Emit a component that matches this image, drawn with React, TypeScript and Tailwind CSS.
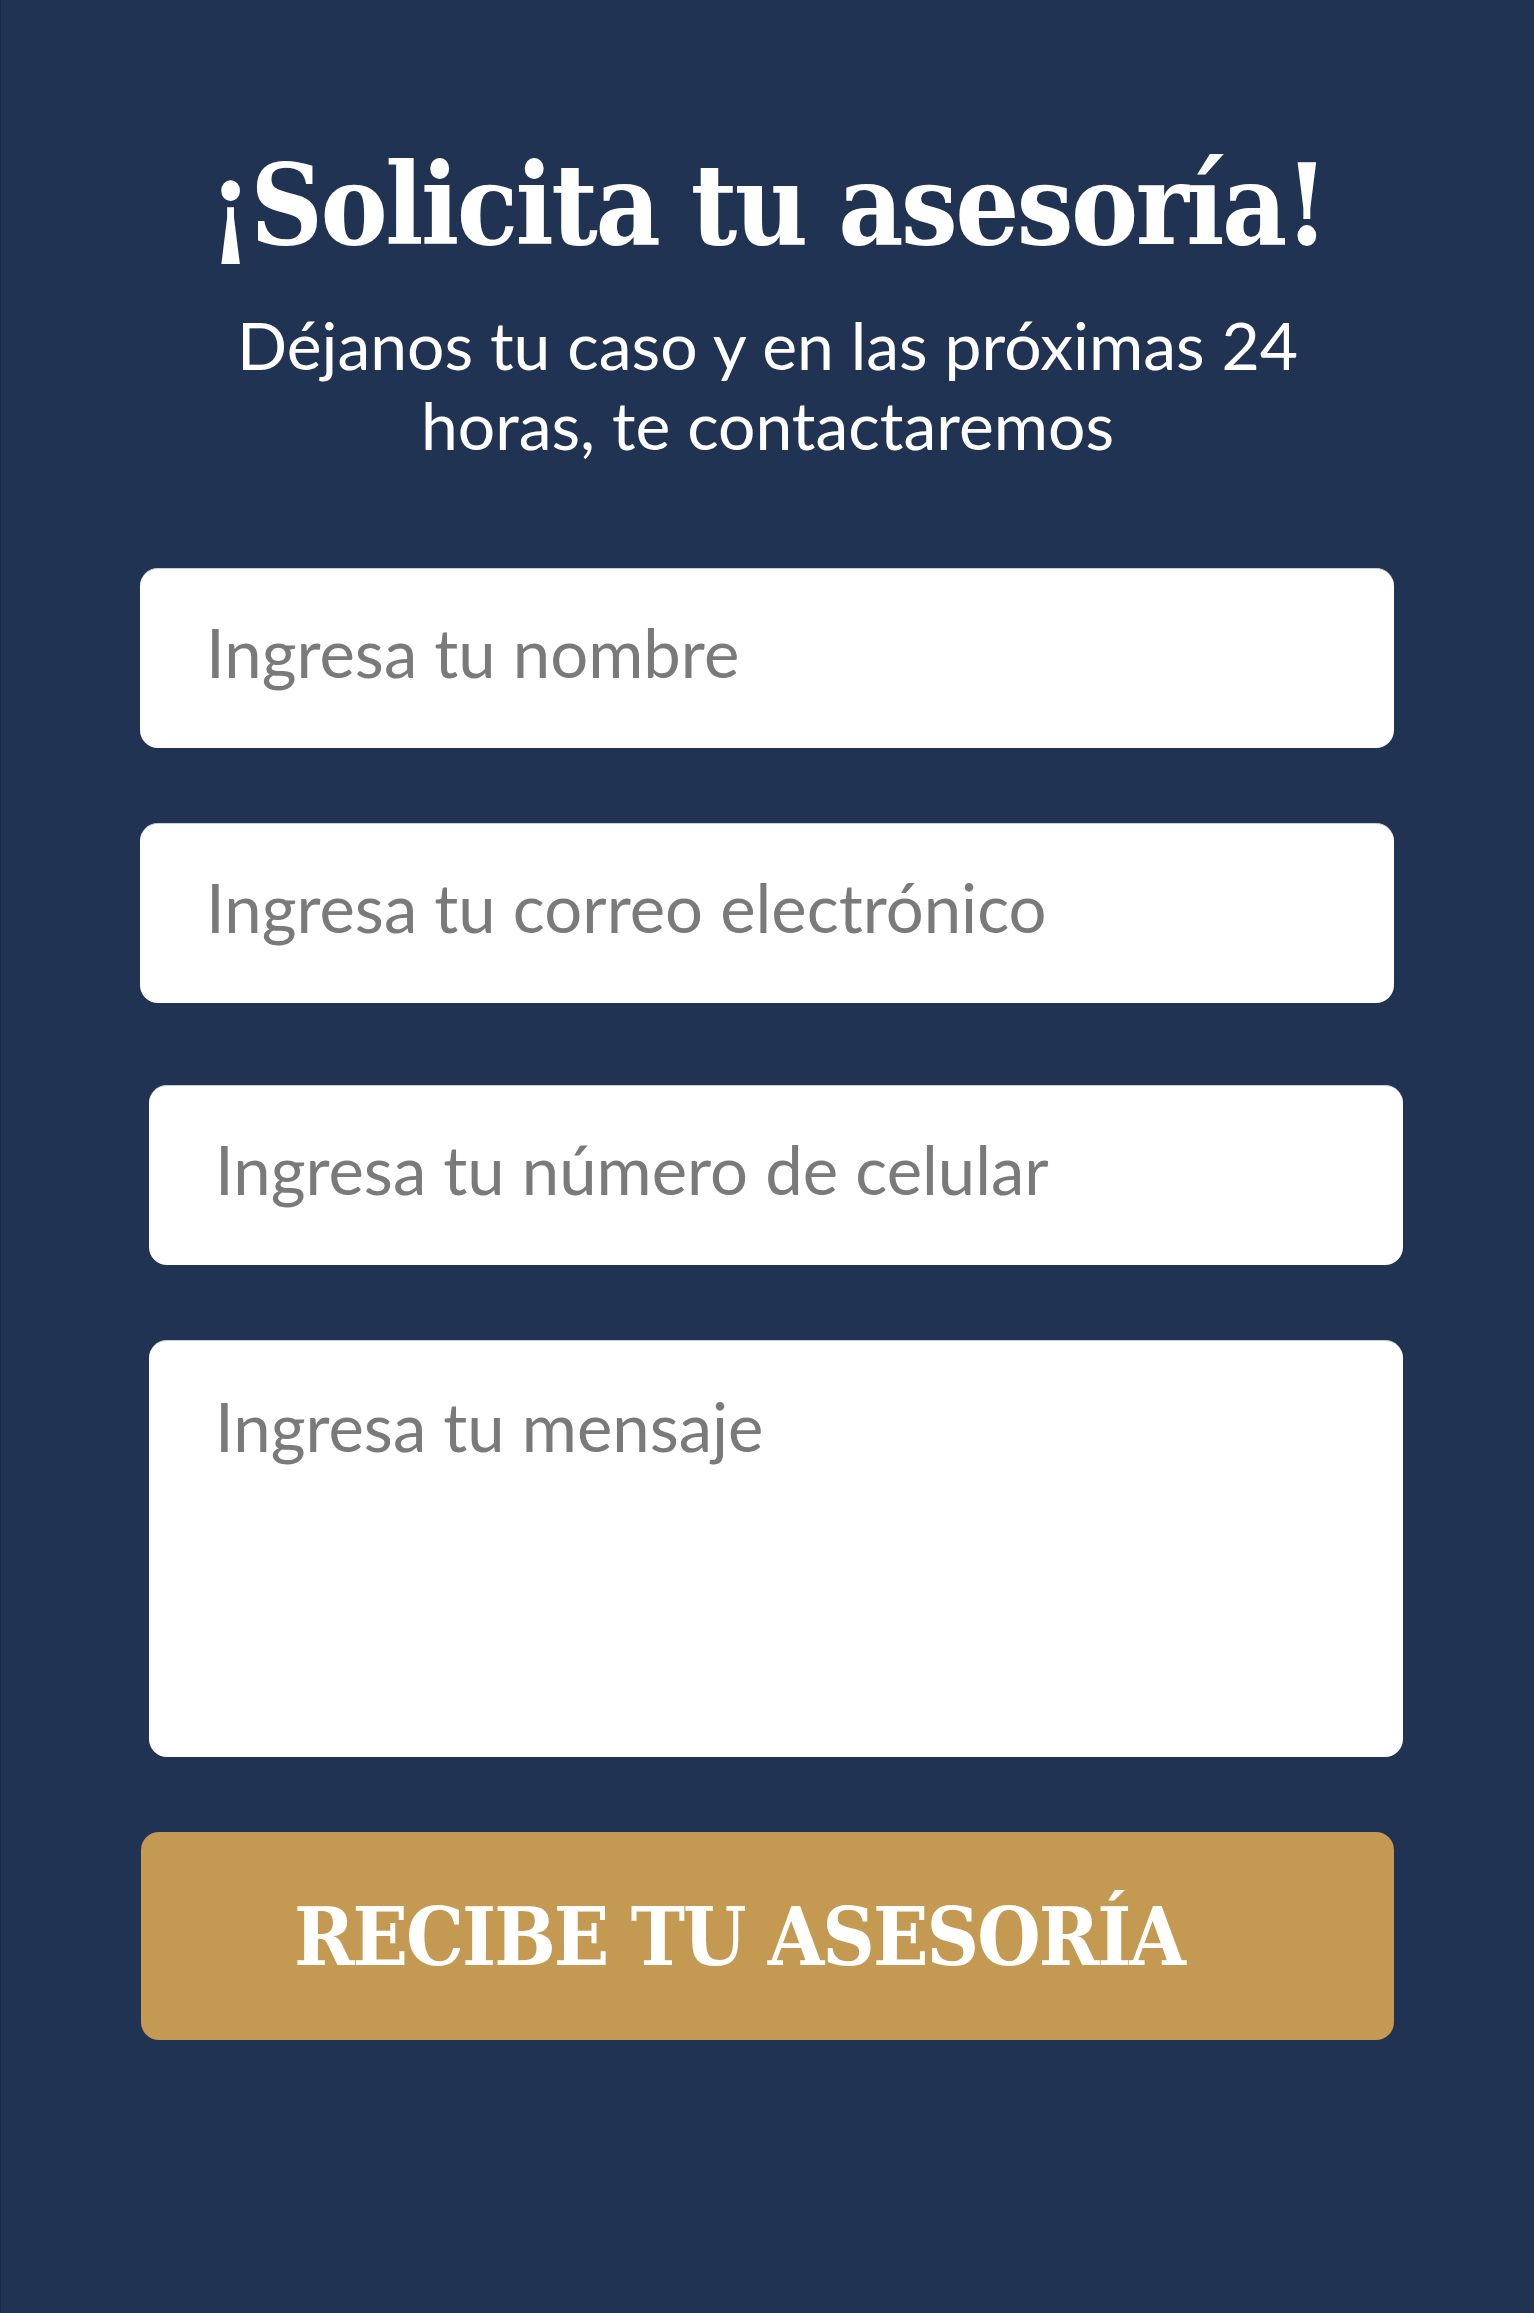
import React from 'react';

const fieldClass =
  "block w-[1254px] h-[180px] rounded-[18px] bg-white border-t border-[#c9ced8] px-[66px] pb-[14px] text-[67px] text-[#333] placeholder:text-[#7a7a7a] font-['Lato',sans-serif] outline-none";

export default function App() {
  return (
    <div className="min-h-screen w-full bg-[#213352] border-l border-[#1a2845] flex flex-col items-center pt-[149px] pb-[274px]">
      <h1 className="font-['DejaVu_Serif',serif] font-bold font-stretch-condensed text-white text-[112px] leading-none tracking-[-2.5px]">
        ¡Solicita tu asesoría!
      </h1>
      <p className="mt-[44px] w-[1100px] text-center font-['Lato',sans-serif] text-white text-[66px] leading-[80px]">
        Déjanos tu caso y en las próximas 24 horas, te contactaremos
      </p>

      <form className="mt-[103px] self-start ml-[139px] w-[1263px] flex flex-col">
        <input type="text" placeholder="Ingresa tu nombre" className={fieldClass} />
        <input type="email" placeholder="Ingresa tu correo electrónico" className={`${fieldClass} mt-[75px]`} />
        <input type="tel" placeholder="Ingresa tu número de celular" className={`${fieldClass} mt-[82px] self-end`} />
        <textarea
          placeholder="Ingresa tu mensaje"
          className="block self-end mt-[75px] w-[1254px] h-[417px] resize-none rounded-[18px] bg-white border-t border-[#c9ced8] px-[66px] pt-[40px] text-[67px] leading-[90px] text-[#333] placeholder:text-[#7a7a7a] font-['Lato',sans-serif] outline-none"
        />
        <button
          type="submit"
          className="mt-[75px] ml-px w-[1253px] h-[208px] rounded-[18px] bg-[#c49a53] flex items-center justify-start pl-[153px] text-white font-['DejaVu_Serif',serif] font-bold font-stretch-condensed text-[81px] leading-none tracking-[-2px]"
        >
          RECIBE TU ASESORÍA
        </button>
      </form>
    </div>
  );
}
